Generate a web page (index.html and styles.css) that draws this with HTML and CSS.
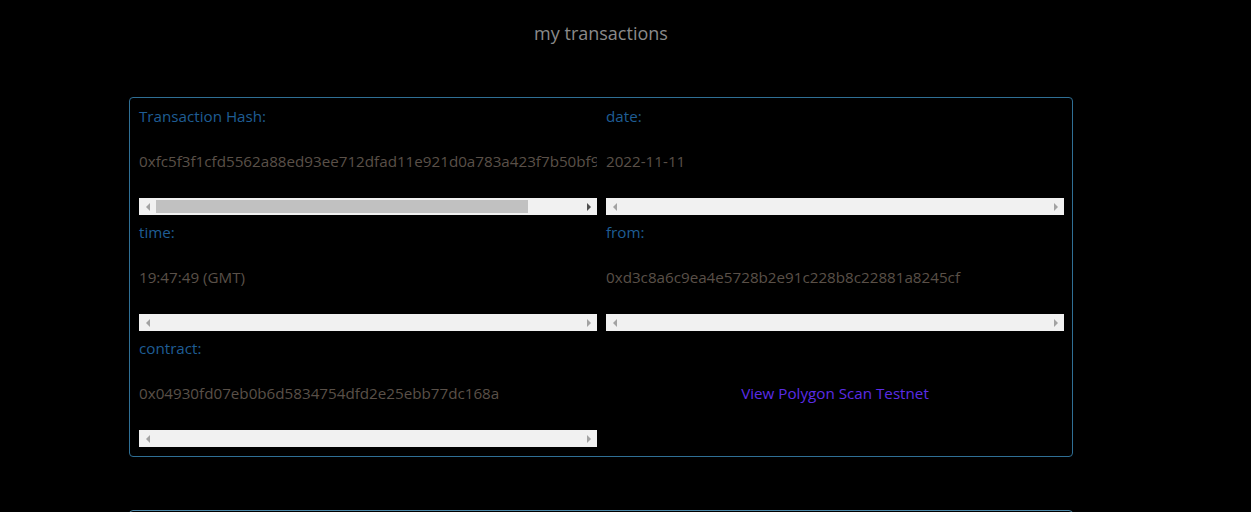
FILE: index.html
```html
<!DOCTYPE html>
<html lang="en">
<head>
<meta charset="utf-8">
<title>my transactions</title>
<link rel="stylesheet" href="styles.css">
</head>
<body>
<main class="page">
  <h1 class="title">my transactions</h1>
  <section class="card">
    <div class="cell">
      <div class="label">Transaction Hash:</div>
      <div class="clip"><p class="value">0xfc5f3f1cfd5562a88ed93ee712dfad11e921d0a783a423f7b50bf977</p></div>
      <div class="hscroll">
        <span class="arrow left off"></span>
        <span class="track"><span class="thumb"></span></span>
        <span class="arrow right on"></span>
      </div>
    </div>
    <div class="cell">
      <div class="label">date:</div>
      <div class="clip"><p class="value">2022-11-11</p></div>
      <div class="hscroll">
        <span class="arrow left off"></span>
        <span class="track"></span>
        <span class="arrow right off"></span>
      </div>
    </div>
    <div class="cell">
      <div class="label">time:</div>
      <div class="clip"><p class="value">19:47:49 (GMT)</p></div>
      <div class="hscroll">
        <span class="arrow left off"></span>
        <span class="track"></span>
        <span class="arrow right off"></span>
      </div>
    </div>
    <div class="cell">
      <div class="label">from:</div>
      <div class="clip"><p class="value">0xd3c8a6c9ea4e5728b2e91c228b8c22881a8245cf</p></div>
      <div class="hscroll">
        <span class="arrow left off"></span>
        <span class="track"></span>
        <span class="arrow right off"></span>
      </div>
    </div>
    <div class="cell">
      <div class="label">contract:</div>
      <div class="clip"><p class="value">0x04930fd07eb0b6d5834754dfd2e25ebb77dc168a</p></div>
      <div class="hscroll">
        <span class="arrow left off"></span>
        <span class="track"></span>
        <span class="arrow right off"></span>
      </div>
    </div>
    <div class="cell link-cell">
      <a class="link" href="#">View Polygon Scan Testnet</a>
    </div>
  </section>
  <section class="card next"></section>
</main>
</body>
</html>
```
FILE: styles.css
```css
html, body {
  background: #000;
}
body {
  margin: 8px;
  font-family: "Open Sans", "DejaVu Sans", sans-serif;
}
.page {
  width: 1186px;
}
.title {
  margin: 14px 0 0;
  text-align: center;
  font-size: 18px;
  font-weight: 500;
  line-height: 22px;
  color: #8a8a8a;
}
.card {
  width: 944px;
  box-sizing: border-box;
  margin: 53px auto 0;
  border: 1px solid #2f6f95;
  border-radius: 4px;
  padding: 10px 8px 9px 9px;
  display: grid;
  grid-template-columns: 1fr 1fr;
  gap: 9px;
}
.card.next {
  margin-top: 53px;
  height: 60px;
  border-color: #4d87a6;
}
.cell {
  min-width: 0;
  display: flex;
  flex-direction: column;
}
.label {
  font-size: 15.2px;
  line-height: 16px;
  height: 16px;
  padding-bottom: 2px;
  color: #1f5d94;
}
.clip {
  overflow: hidden;
}
.value {
  margin: 27px 0 29px;
  font-size: 15.2px;
  line-height: 16px;
  height: 16px;
  color: #5a5048;
  white-space: nowrap;
}
.hscroll {
  height: 17px;
  flex: none;
  background: #f1f1f1;
  display: flex;
}
.arrow {
  width: 17px;
  flex: none;
  display: flex;
  align-items: center;
  justify-content: center;
}
.arrow::before {
  content: "";
  width: 0;
  height: 0;
  border-top: 4px solid transparent;
  border-bottom: 4px solid transparent;
}
.arrow.left::before {
  border-right: 4px solid #a3a3a3;
}
.arrow.right::before {
  border-left: 4px solid #a3a3a3;
}
.arrow.right.on::before {
  border-left-color: #505050;
}
.track {
  flex: 1;
  padding: 2px 0;
  display: flex;
}
.thumb {
  width: 87.7%;
  background: #c1c1c1;
}
.link-cell {
  padding-top: 44px;
  align-items: center;
}
.link {
  font-size: 15.2px;
  line-height: 18px;
  color: #5b2ce6;
  text-decoration: none;
}
```
